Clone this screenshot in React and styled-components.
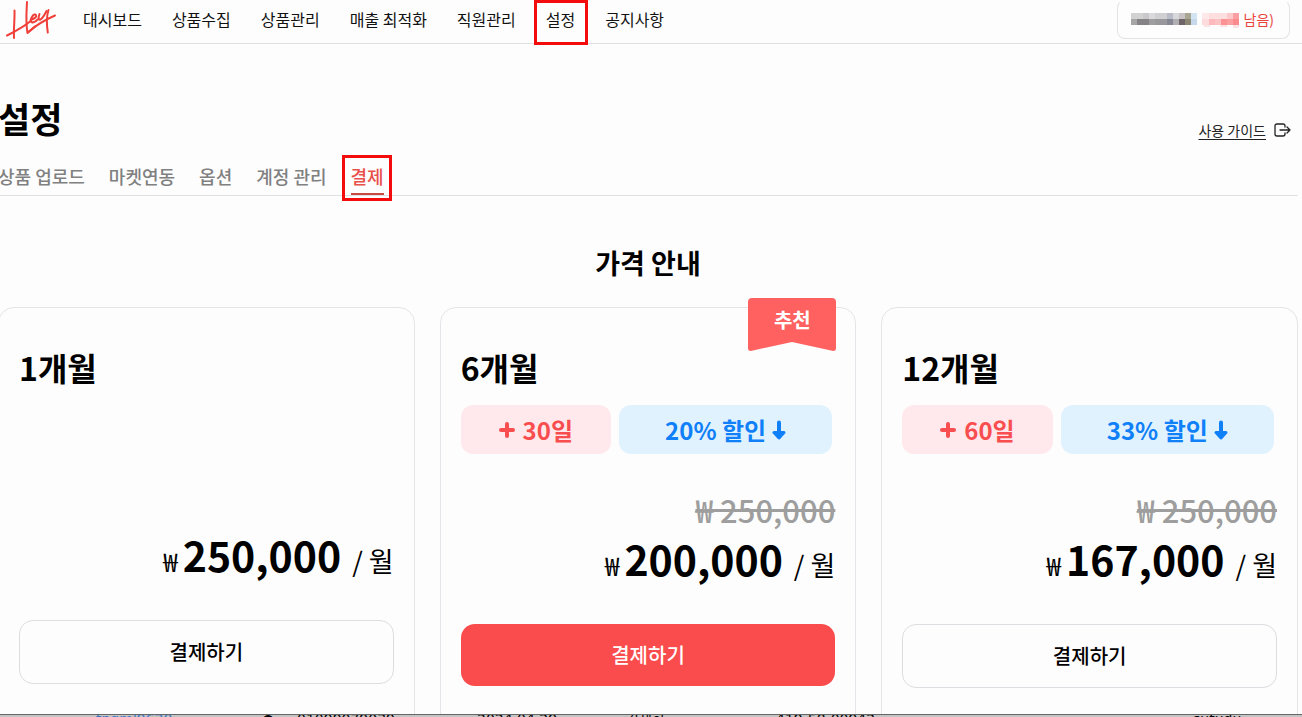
import React from "react";
import styled, { createGlobalStyle, css } from "styled-components";

const GlobalStyle = createGlobalStyle`
  *, *::before, *::after { box-sizing: border-box; }
  body {
    margin: 0;
    background: #fdfdfd;
    color: #000;
    font-family: "Noto Sans CJK KR", "Noto Sans", sans-serif;
    overflow: hidden;
  }
  h1, h2, h3, p, ul { margin: 0; padding: 0; }
  button { font-family: inherit; }
`;

const Page = styled.div`
  height: 100vh;
  display: flex;
  flex-direction: column;
`;

const TopBar = styled.header`
  flex: none;
  display: flex;
  align-items: flex-start;
  height: 44px;
  padding: 0 12px 0 4px;
  border-bottom: 1px solid #dfe0e4;
`;

const HomeLink = styled.a`
  display: block;
  width: 79px;
  height: 40px;
`;

const MainNav = styled.nav`
  display: flex;
  gap: 30px;
  flex: 1;
`;

const marked = css`
  position: relative;
  &::after {
    content: "";
    position: absolute;
    inset: ${(p) => p.$inset};
    border: 3px solid #f40b0b;
    pointer-events: none;
  }
`;

const NavLink = styled.a`
  color: #111;
  font-size: 16px;
  line-height: 38px;
  white-space: nowrap;
  text-decoration: none;
  ${(p) => p.$marked && marked}
`;

const Account = styled.button`
  display: flex;
  align-items: center;
  gap: 5px;
  height: 39px;
  padding: 0 15px 2px 13px;
  border: 1px solid #e2e3e6;
  border-top-color: transparent;
  border-radius: 8px;
  background: transparent;
  color: #e8443d;
  font-size: 14px;
  line-height: 20px;
`;

const Main = styled.main`
  flex: 1;
  min-height: 0;
  overflow: hidden;
  padding: 46px 4px 0 0;
`;

const Content = styled.div`
  margin-left: -2px;
`;

const TitleRow = styled.div`
  display: flex;
  justify-content: space-between;
  align-items: flex-end;
  padding-right: 7px;
`;

const PageTitle = styled.h1`
  font-size: 35px;
  line-height: 56px;
  font-weight: 700;
`;

const GuideLink = styled.a`
  display: flex;
  align-items: center;
  gap: 8px;
  color: #222;
  font-size: 14px;
  line-height: 20px;
  margin-bottom: 6px;
  text-decoration: none;
  span { text-decoration: underline; text-underline-offset: 3px; }
`;

const Tabs = styled.nav`
  display: flex;
  gap: 24px;
  height: 50px;
  padding-top: 11px;
  border-bottom: 1px solid #dfe0e4;
`;

const Tab = styled.a`
  display: block;
  height: 38px;
  font-size: 18px;
  line-height: 38px;
  font-weight: 500;
  white-space: nowrap;
  text-decoration: none;
  color: #808080;
  ${(p) =>
    p.$active &&
    css`
      color: #e8504b;
      border-bottom: 2px solid #c9483f;
      ${marked}
    `}
`;

const SectionTitle = styled.h2`
  margin: 47px 0 24px;
  text-align: center;
  font-size: 27px;
  line-height: 40px;
  font-weight: 700;
`;

const Plans = styled.div`
  display: grid;
  grid-template-columns: repeat(3, 1fr);
  gap: 25px;
`;

const PlanCard = styled.article`
  position: relative;
  display: flex;
  flex-direction: column;
  height: 440px;
  padding: 35px 20px 0;
  border: 1px solid #e4e5e8;
  border-radius: 16px;
`;

const Ribbon = styled.div`
  position: absolute;
  top: -10px;
  right: 19px;
  width: 88px;
  height: 53px;
  color: #fff;
  font-size: 20px;
  line-height: 44px;
  font-weight: 700;
  text-align: center;
  svg { position: absolute; inset: 0; }
  span { position: relative; }
`;

const PlanName = styled.h3`
  font-size: 32px;
  line-height: 48px;
  font-weight: 700;
`;

const Offer = styled.div`
  min-height: 139px;
`;

const Chips = styled.div`
  display: flex;
  gap: 8px;
  padding: 14px 3px 32px 0;
`;

const Chip = styled.span`
  display: flex;
  align-items: center;
  justify-content: center;
  gap: ${(p) => (p.$tone === "bonus" ? "8px" : "6px")};
  flex: ${(p) => (p.$tone === "bonus" ? "150 0 0" : "213 0 0")};
  height: 49px;
  border-radius: 12px;
  font-size: 24px;
  font-weight: 700;
  line-height: 36px;
  white-space: nowrap;
  background: ${(p) => (p.$tone === "bonus" ? "#ffe9ec" : "#e1f2ff")};
  color: ${(p) => (p.$tone === "bonus" ? "#f94e4f" : "#0f80f8")};
`;

const OldPrice = styled.del`
  display: block;
  text-align: right;
  color: #9e9e9e;
  font-size: 31px;
  line-height: 48px;
  font-weight: 500;
`;

const Price = styled.p`
  display: flex;
  justify-content: flex-end;
  align-items: baseline;
  height: 48px;
  line-height: 48px;
  font-size: 27px;
  white-space: pre;
  small { font-size: 26px; margin-right: 5px; }
  strong { font-size: 41px; font-weight: 700; margin-right: 11px; }
`;

const PayButton = styled.button`
  margin-top: 42px;
  height: ${(p) => (p.$primary ? "62px" : "64px")};
  padding: 0 0 2px;
  border: ${(p) => (p.$primary ? "0" : "1px solid #dcdde0")};
  border-radius: 14px;
  background: ${(p) => (p.$primary ? "#fa4c4c" : "transparent")};
  color: ${(p) => (p.$primary ? "#fff" : "#000")};
  font-size: 20px;
  font-weight: 500;
`;

const RecordStrip = styled.footer`
  flex: none;
  display: grid;
  grid-template-columns: 166fr 35fr 180fr 149fr 150fr 417fr 109fr;
  height: 3px;
  padding-left: 96px;
  overflow: hidden;
  border-top: 1px solid #666;
  background: #c4c4c4;
  font-family: "DejaVu Sans", "Noto Sans CJK KR", sans-serif;
  font-size: 14px;
  line-height: 8px;
  white-space: nowrap;
  a { color: #3b78c4; text-decoration: none; }
`;

function HeyLogo() {
  return (
    <svg width="54" height="40" viewBox="0 0 54 40" fill="none" stroke="#f0403a" strokeWidth="2" strokeLinecap="round" strokeLinejoin="round" role="img" aria-label="Hey">
      <path d="M10.500 10.500C10.800 20 9.500 29 10 38" />
      <path d="M23 2C22.500 13 21.500 22 23.500 33L31 26.500" />
      <path d="M3 35.500C12 31 20 26.500 26 21.500" />
      <path d="M26.500 20C30 19 33 17 32 15C30.500 13 26.500 17 27 21C27.500 23.500 31 22.500 33.500 19.500" />
      <path d="M35.500 14C34 18 34.500 20.500 36.500 19.500C39 18 41 14 42.500 11" />
      <path d="M44.500 10C42.500 16 42.800 26 43.800 32.500" />
      <path d="M25 31.500C33 24.500 43 19 51 15.500" />
    </svg>
  );
}

const MASK_TOP = [
  [0, 12, "#d2d2d3"], [12, 6, "#c9c9cc"], [18, 6, "#dad9db"], [24, 12, "#d0cfd2"], [36, 6, "#b9bbc6"],
  [42, 6, "#d6d8dc"], [48, 6, "#c8c2c4"], [54, 6, "#a9a593"], [60, 6, "#d3e4f3"], [71, 7, "#fde9ea"],
  [78, 18, "#fddfe0"], [96, 6, "#fcc9ca"], [102, 6, "#fa9fa2"],
];
const MASK_BOTTOM = [
  [0, 6, "#a6a6a7"], [6, 12, "#858386"], [18, 6, "#9e9ea1"], [24, 12, "#98979b"], [36, 6, "#858794"],
  [42, 6, "#b0aeb3"], [48, 6, "#6f6568"], [54, 6, "#8b8774"], [60, 6, "#c6d9ec"], [71, 7, "#fddcdd"],
  [78, 6, "#fdb9bb"], [84, 6, "#fcc3c5"], [90, 6, "#fb9293"], [96, 6, "#fc9fa0"], [102, 6, "#fa8a8e"],
];

function MaskedName() {
  return (
    <svg width="108" height="18" viewBox="0 0 108 18" shapeRendering="crispEdges" aria-hidden="true">
      {MASK_TOP.map(([x, w, c]) => (
        <rect key={x} x={x} y="3" width={w} height="6" fill={c} />
      ))}
      {MASK_BOTTOM.map(([x, w, c]) => (
        <rect key={x} x={x} y="9" width={w} height="6" fill={c} />
      ))}
      <path fill="#fde2e3" d="M73 15h6v2h-6zM89 15h7v2h-7zM102 15h6v3h-6z" />
    </svg>
  );
}

function ExitIcon() {
  return (
    <svg width="17" height="14" viewBox="0 0 17 14" fill="none" stroke="#222" strokeWidth="1.3" strokeLinecap="round" strokeLinejoin="round" aria-hidden="true">
      <path d="M11 4V3Q11 1 9 1H3Q1 1 1 3V11Q1 13 3 13H9Q11 13 11 11V10M6 7H16M13 4L16 7L13 10" />
    </svg>
  );
}

function PlusIcon() {
  return (
    <svg width="16" height="16" viewBox="0 0 16 16" stroke="currentColor" strokeWidth="4" strokeLinecap="round" aria-hidden="true">
      <path d="M8 2V14M2 8H14" />
    </svg>
  );
}

function ArrowDown() {
  return (
    <svg width="14" height="20" viewBox="0 0 14 20" fill="none" stroke="currentColor" strokeWidth="4" strokeLinecap="round" strokeLinejoin="round" aria-hidden="true">
      <path d="M7 2.500V14" />
      <path strokeWidth="3" fill="currentColor" d="M2 12.500H12L7 18Z" />
    </svg>
  );
}

const NAV = ["대시보드", "상품수집", "상품관리", "매출 최적화", "직원관리", "설정", "공지사항"];
const TABS = ["상품 업로드", "마켓연동", "옵션", "계정 관리", "결제"];
const PLANS = [
  { name: "1개월", price: "250,000" },
  { name: "6개월", price: "200,000", bonus: "30일", discount: "20% 할인", recommended: true },
  { name: "12개월", price: "167,000", bonus: "60일", discount: "33% 할인" },
];

function Plan({ name, price, bonus, discount, recommended }) {
  return (
    <PlanCard>
      {recommended && (
        <Ribbon>
          <svg width="88" height="53" viewBox="0 0 88 53" aria-hidden="true">
            <path fill="#ff6161" d="M4 0H84Q88 0 88 4V50Q88 54 83 52.500L44 44L5 52.500Q0 54 0 50V4Q0 0 4 0Z" />
          </svg>
          <span>추천</span>
        </Ribbon>
      )}
      <PlanName>{name}</PlanName>
      <Offer>
        {bonus && (
          <>
            <Chips>
              <Chip $tone="bonus"><PlusIcon />{bonus}</Chip>
              <Chip $tone="discount">{discount}<ArrowDown /></Chip>
            </Chips>
            <OldPrice>₩ 250,000</OldPrice>
          </>
        )}
      </Offer>
      <Price><small>₩</small><strong>{price}</strong>/ 월</Price>
      <PayButton type="button" $primary={recommended}>결제하기</PayButton>
    </PlanCard>
  );
}

export default function App() {
  return (
    <Page>
      <GlobalStyle />
      <TopBar>
        <HomeLink href="#home"><HeyLogo /></HomeLink>
        <MainNav>
          {NAV.map((label) => (
            <NavLink key={label} href="#menu" $marked={label === "설정"} $inset="0 -13px -7px -12px">{label}</NavLink>
          ))}
        </MainNav>
        <Account type="button"><MaskedName />남음)</Account>
      </TopBar>
      <Main>
        <Content>
          <TitleRow>
            <PageTitle>설정</PageTitle>
            <GuideLink href="#guide"><span>사용 가이드</span><ExitIcon /></GuideLink>
          </TitleRow>
          <Tabs>
            {TABS.map((label) => (
              <Tab key={label} href="#tab" $active={label === "결제"} $inset="-2px -8px -8px -9px">{label}</Tab>
            ))}
          </Tabs>
          <SectionTitle>가격 안내</SectionTitle>
          <Plans>
            {PLANS.map((plan) => <Plan key={plan.name} {...plan} />)}
          </Plans>
        </Content>
      </Main>
      <RecordStrip>
        <a href="#record">tngml9630</a>
        <span>●</span>
        <span>01099079039</span>
        <span>2024.04.29</span>
        <span>김세희</span>
        <span>419-58-00942</span>
        <span>sutudu</span>
      </RecordStrip>
    </Page>
  );
}
